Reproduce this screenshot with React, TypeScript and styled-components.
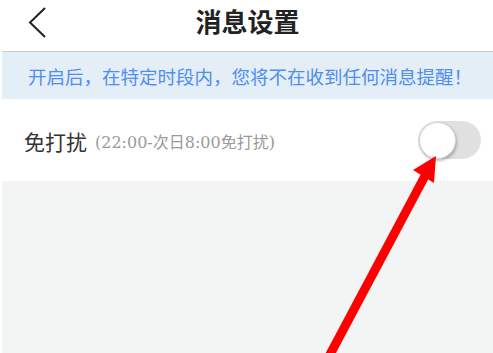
import styled, { createGlobalStyle } from "styled-components";

const GlobalStyle = createGlobalStyle`
  html, body {
    margin: 0;
    padding: 0;
    background: #ffffff;
  }
  body {
    font-family: "Noto Sans CJK SC", "Noto Sans", sans-serif;
  }
`;

const Page = styled.div`
  position: relative;
  width: 493px;
  height: 353px;
  overflow: hidden;
  display: flex;
  flex-direction: column;
  padding-left: 2px;
  box-sizing: border-box;
`;

const Header = styled.header`
  height: 51px;
  flex-shrink: 0;
  display: grid;
  grid-template-columns: 1fr auto 1fr;
  align-items: start;
  border-bottom: 1px solid #c9cacc;
`;

const BackButton = styled.button`
  justify-self: start;
  margin: 7px 0 0 26px;
  padding: 0;
  border: none;
  background: none;
  width: 20px;
  height: 32px;
  display: flex;
`;

const Title = styled.h1`
  margin: 7px 0 0;
  font-size: 26px;
  line-height: 28px;
  font-weight: 700;
  color: #222222;
`;

const Notice = styled.div`
  height: 47px;
  flex-shrink: 0;
  display: flex;
  align-items: center;
  padding-left: 26px;
  background: #e3eef6;
  color: #4f8df0;
  font-size: 18.5px;
`;

const SettingRow = styled.div`
  height: 82px;
  flex-shrink: 0;
  display: flex;
  align-items: center;
  padding: 2px 12px 0 22px;
  box-sizing: border-box;
  background: #ffffff;
`;

const Label = styled.span`
  font-size: 21px;
  color: #333333;
`;

const Hint = styled.span`
  margin-left: 8px;
  font-family: "DejaVu Serif", "Noto Sans CJK SC", serif;
  font-size: 16px;
  color: #9a9a9a;
  flex: 1;
`;

const Switch = styled.div<{ on?: boolean }>`
  position: relative;
  width: 63px;
  height: 38px;
  margin-top: -3px;
  border-radius: 19px;
  background: ${(p) => (p.on ? "#4cd964" : "#e0e0e0")};
`;

const Knob = styled.div<{ on?: boolean }>`
  position: absolute;
  top: 1px;
  left: ${(p) => (p.on ? "26px" : "1px")};
  width: 35px;
  height: 35px;
  border-radius: 50%;
  background: #ffffff;
  border: 1px solid #d4d4d4;
  box-shadow: 1px 2px 3px rgba(0, 0, 0, 0.25);
`;

const Filler = styled.div`
  flex: 1;
  background: #f3f4f4;
`;

const Pointer = styled.svg`
  position: absolute;
  left: 0;
  top: 0;
  pointer-events: none;
`;

export default function App() {
  return (
    <>
      <GlobalStyle />
      <Page>
        <Header>
          <BackButton aria-label="back">
            <svg width="20" height="32" viewBox="0 0 20 32">
              <polyline
                points="17,1 2,15.5 17,30"
                fill="none"
                stroke="#222"
                strokeWidth="2"
              />
            </svg>
          </BackButton>
          <Title>消息设置</Title>
        </Header>
        <Notice>开启后，在特定时段内，您将不在收到任何消息提醒！</Notice>
        <SettingRow>
          <Label>免打扰</Label>
          <Hint>(22:00-次日8:00免打扰)</Hint>
          <Switch>
            <Knob />
          </Switch>
        </SettingRow>
        <Filler />
        <Pointer width="493" height="353" viewBox="0 0 493 353">
          <line x1="326" y1="362" x2="426" y2="174" stroke="#ff0000" strokeWidth="9" />
          <polygon points="436,156 413,170 434,183" fill="#ff0000" />
        </Pointer>
      </Page>
    </>
  );
}
